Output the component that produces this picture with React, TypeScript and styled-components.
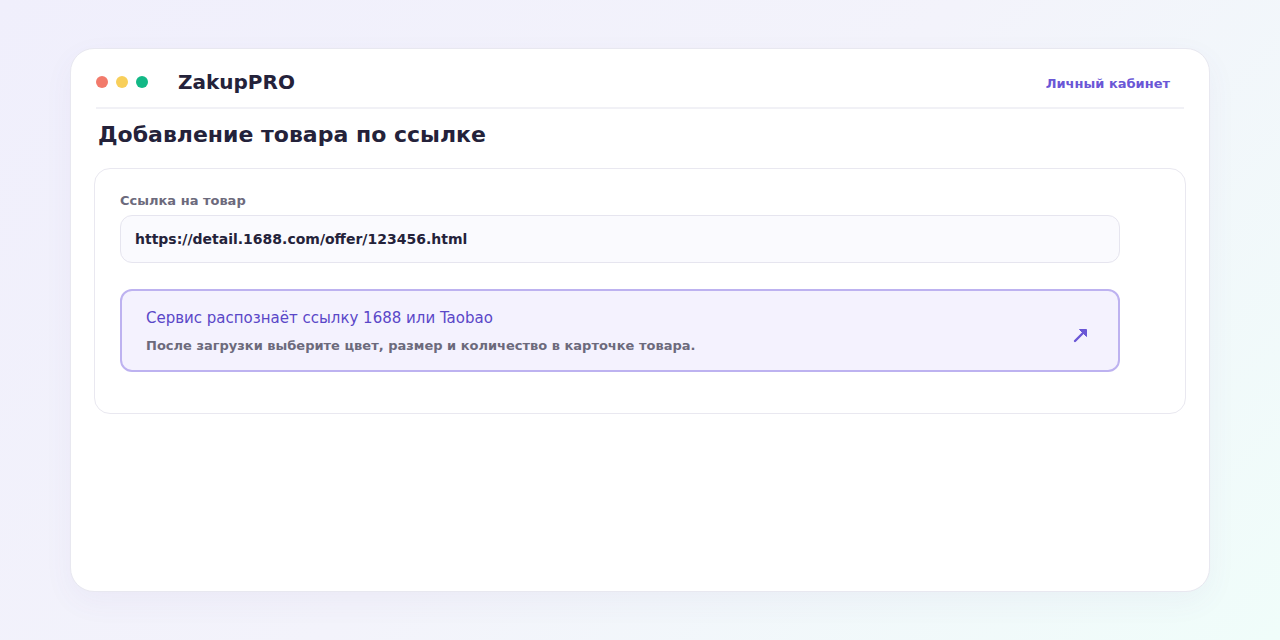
import React from 'react'
import styled, { createGlobalStyle } from 'styled-components'

const GlobalStyle = createGlobalStyle`
  * {
    box-sizing: border-box;
  }

  html,
  body {
    margin: 0;
    padding: 0;
    height: 100%;
  }

  body {
    font-family: 'DejaVu Sans', 'Noto Sans', sans-serif;
    color: #24223a;
  }
`

const Page = styled.div`
  min-height: 100vh;
  padding: 48px 70px;
  background: linear-gradient(135deg, #f0effc 0%, #f3f3fb 50%, #f0fdfa 100%);
`

const Window = styled.div`
  height: 544px;
  padding: 8px 23px 24px;
  background: #ffffff;
  border: 1px solid #e8e8f0;
  border-radius: 24px;
  box-shadow: 0 10px 30px rgba(90, 80, 160, 0.05);
`

const TopBar = styled.header`
  display: flex;
  align-items: center;
  height: 52px;
  margin: 0 2px;
  padding: 0 14px 0 0;
  border-bottom: 2px solid #f1f1f6;
`

const Dots = styled.div`
  display: flex;
  gap: 8px;
  margin-right: 30px;
`

const Dot = styled.span<{ color: string }>`
  width: 12px;
  height: 12px;
  border-radius: 50%;
  background: ${(props) => props.color};
`

const Brand = styled.div`
  font-size: 20px;
  font-weight: 700;
  color: #24223a;
`

const CabinetLink = styled.a`
  margin: 2px 0 0 auto;
  font-size: 13px;
  font-weight: 700;
  color: #6a57d6;
  text-decoration: none;
`

const Heading = styled.h1`
  margin: 13px 0 21px 4px;
  font-size: 22px;
  font-weight: 700;
  color: #24223a;
`

const Panel = styled.section`
  padding: 24px 25px 41px;
  border: 1px solid #e9e8f0;
  border-radius: 16px;
`

const Content = styled.div`
  max-width: 1000px;
`

const Label = styled.label`
  display: block;
  margin-bottom: 7px;
  font-size: 13px;
  font-weight: 700;
  color: #6c6a7c;
`

const UrlInput = styled.div`
  display: flex;
  align-items: center;
  height: 48px;
  padding: 0 14px;
  background: #fafafe;
  border: 1px solid #e6e5ef;
  border-radius: 12px;
  font-size: 14px;
  font-weight: 700;
  color: #24223a;
`

const Hint = styled.div`
  display: flex;
  align-items: center;
  margin-top: 26px;
  padding: 18px 30px 17px 24px;
  background: #f4f2fe;
  border: 2px solid #bdb2f0;
  border-radius: 12px;
`

const HintText = styled.div`
  flex: 1;
`

const HintTitle = styled.div`
  font-size: 15px;
  color: #5a47c8;
`

const HintNote = styled.div`
  margin-top: 11px;
  font-size: 13px;
  font-weight: 700;
  color: #6c6a7c;
`

const ArrowBox = styled.span`
  display: flex;
  margin-top: 9px;
`

const ArrowIcon = () => (
  <svg width="15" height="15" viewBox="0 0 15 15" fill="none">
    <path d="M2 13L10.5 4.5" stroke="#6a57d6" strokeWidth="2.4" strokeLinecap="round" />
    <path d="M6.5 1.5H13.5V8.5Z" fill="#6a57d6" stroke="#6a57d6" strokeWidth="1" strokeLinejoin="round" />
  </svg>
)

export default function App() {
  return (
    <>
      <GlobalStyle />
      <Page>
        <Window>
          <TopBar>
            <Dots>
              <Dot color="#f27a6b" />
              <Dot color="#f8cf5a" />
              <Dot color="#12b886" />
            </Dots>
            <Brand>ZakupPRO</Brand>
            <CabinetLink href="#">Личный кабинет</CabinetLink>
          </TopBar>
          <Heading>Добавление товара по ссылке</Heading>
          <Panel>
            <Content>
              <Label>Ссылка на товар</Label>
              <UrlInput>https://detail.1688.com/offer/123456.html</UrlInput>
              <Hint>
                <HintText>
                  <HintTitle>Сервис распознаёт ссылку 1688 или Taobao</HintTitle>
                  <HintNote>
                    После загрузки выберите цвет, размер и количество в карточке товара.
                  </HintNote>
                </HintText>
                <ArrowBox>
                  <ArrowIcon />
                </ArrowBox>
              </Hint>
            </Content>
          </Panel>
        </Window>
      </Page>
    </>
  )
}
